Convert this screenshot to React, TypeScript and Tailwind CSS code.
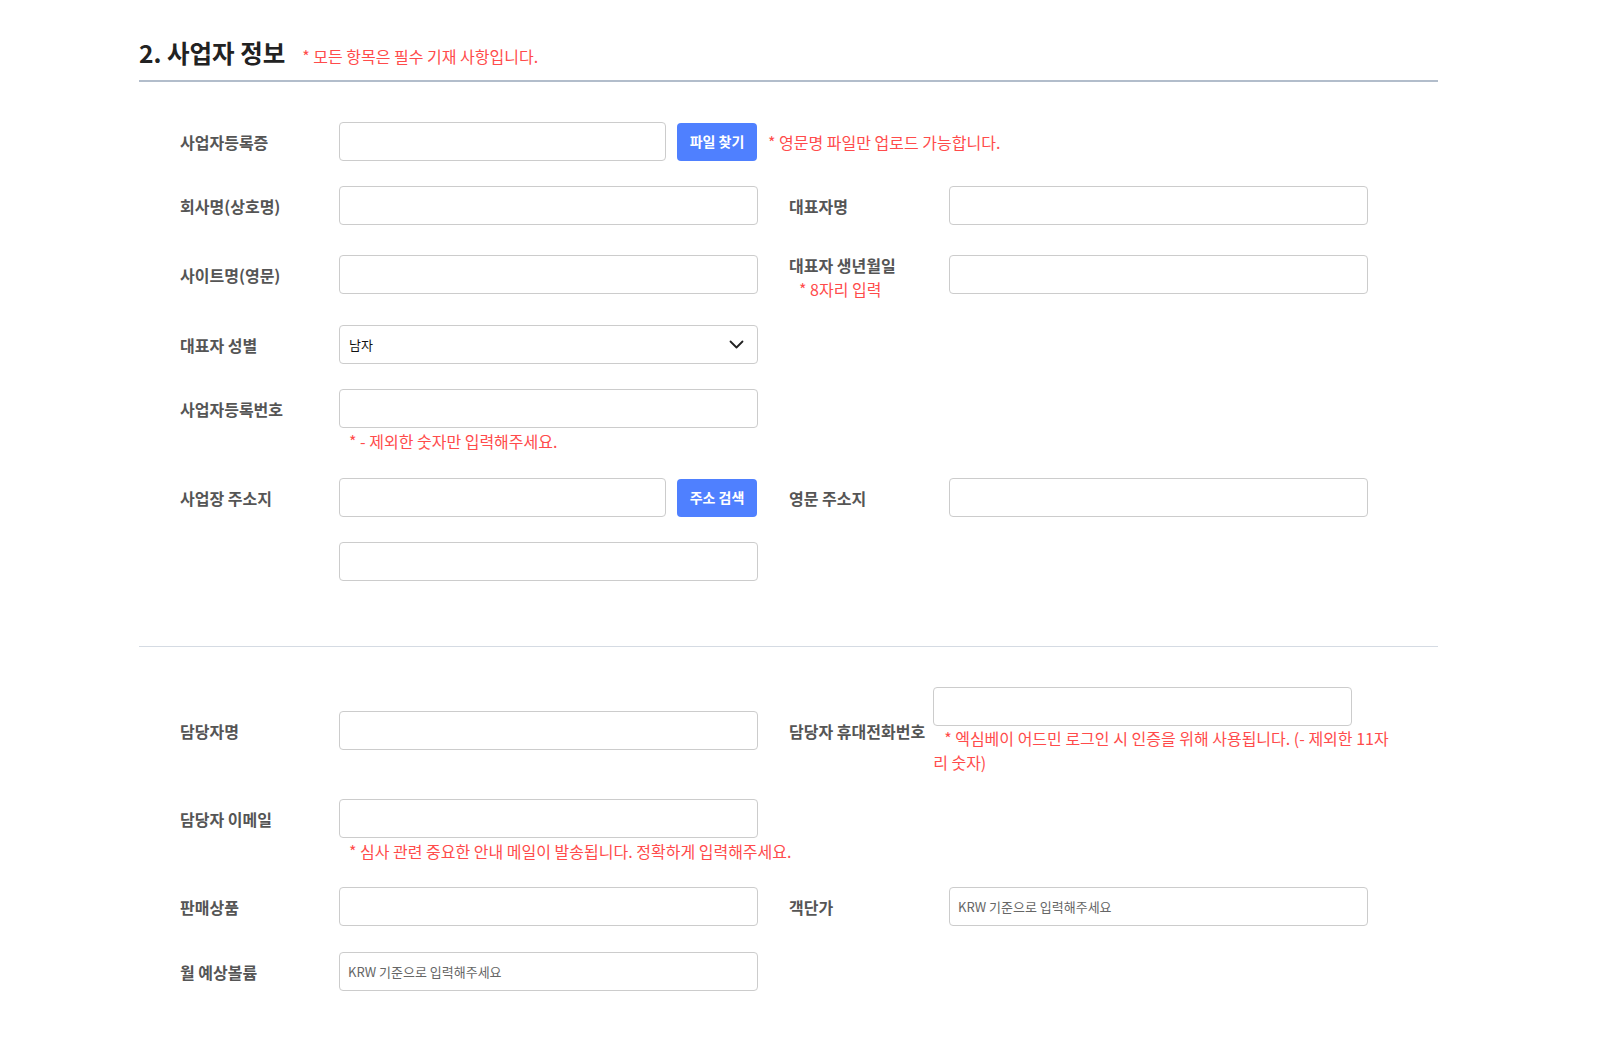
import React from "react";

const labelCls = "shrink-0 text-[16px] font-bold text-[#555]";
const inputCls =
  "h-[39px] rounded-[4px] border border-[#cccccc] bg-white px-2 text-[13px] text-[#222] outline-none placeholder:text-[#666]";
const noteCls = "text-[16px] text-[#ff4b4b]";
const btnCls =
  "h-[38px] w-[80px] shrink-0 rounded-[4px] bg-[#4f80ff] text-[14px] font-bold text-white";

function Label({ children, w = "w-[159px]" }: { children: React.ReactNode; w?: string }) {
  return <div className={`${labelCls} ${w} flex h-[39px] items-center`}>{children}</div>;
}

export default function App() {
  return (
    <div className="min-h-screen bg-white pb-10 font-['Noto_Sans_CJK_KR','Noto_Sans',sans-serif]">
      <div className="ml-[139px] w-[1299px] pt-[37px]">
        {/* 제목 */}
        <div className="flex items-baseline border-b-2 border-[#b2bdcb] pb-[11px]">
          <h2 className="text-[24.5px] font-bold leading-[32px] text-[#222]">2. 사업자 정보</h2>
          <span className={`${noteCls} ml-[17px]`}>* 모든 항목은 필수 기재 사항입니다.</span>
        </div>

        <div className="pl-[41px]">
          {/* 사업자등록증 */}
          <div className="mt-[40px] flex items-center">
            <Label>사업자등록증</Label>
            <input className={`${inputCls} w-[327px]`} />
            <button className={`${btnCls} ml-[11px]`}>파일 찾기</button>
            <span className={`${noteCls} ml-[11px]`}>* 영문명 파일만 업로드 가능합니다.</span>
          </div>

          {/* 회사명 / 대표자명 */}
          <div className="mt-[25px] flex items-center">
            <Label>회사명(상호명)</Label>
            <input className={`${inputCls} w-[419px]`} />
            <div className="ml-[31px] flex">
              <Label w="w-[160px]">대표자명</Label>
              <input className={`${inputCls} w-[419px]`} />
            </div>
          </div>

          {/* 사이트명 / 생년월일 */}
          <div className="mt-[30px] flex items-start">
            <Label>사이트명(영문)</Label>
            <input className={`${inputCls} w-[419px]`} />
            <div className="ml-[31px] flex items-start">
              <div className="-mt-[2px] w-[160px] shrink-0 leading-[24px]">
                <div className="text-[16px] font-bold text-[#555]">대표자 생년월일</div>
                <div className={`${noteCls} pl-[10px]`}>* 8자리 입력</div>
              </div>
              <input className={`${inputCls} w-[419px]`} />
            </div>
          </div>

          {/* 대표자 성별 */}
          <div className="mt-[24px] flex items-center">
            <Label>대표자 성별</Label>
            <div className="flex h-[39px] w-[419px] items-center justify-between rounded-[4px] border border-[#cccccc] bg-white pl-[9px] pr-[13px]">
              <span className="text-[13px] text-[#111]">남자</span>
              <svg width="15" height="9" viewBox="0 0 15 9" fill="none">
                <path d="M1.5 1.5l6 6 6-6" stroke="#222" strokeWidth="1.8" strokeLinecap="round" strokeLinejoin="round" />
              </svg>
            </div>
          </div>

          {/* 사업자등록번호 */}
          <div className="mt-[25px] flex items-start">
            <Label>사업자등록번호</Label>
            <div className="flex flex-col">
              <input className={`${inputCls} w-[419px]`} />
              <div className={`${noteCls} pl-[10px] leading-[26px]`}>* - 제외한 숫자만 입력해주세요.</div>
            </div>
          </div>

          {/* 사업장 주소지 / 영문 주소지 */}
          <div className="mt-[24px] flex items-center">
            <Label>사업장 주소지</Label>
            <div className="flex w-[419px] items-center gap-[11px]">
              <input className={`${inputCls} w-[327px]`} />
              <button className={btnCls}>주소 검색</button>
            </div>
            <div className="ml-[31px] flex">
              <Label w="w-[160px]">영문 주소지</Label>
              <input className={`${inputCls} w-[419px]`} />
            </div>
          </div>

          <div className="mt-[25px] flex">
            <div className="w-[159px] shrink-0" />
            <input className={`${inputCls} w-[419px]`} />
          </div>
        </div>

        <div className="mt-[65px] border-t border-[#d5dbe3]" />

        <div className="pl-[41px]">
          {/* 담당자명 / 휴대전화번호 */}
          <div className="mt-[40px] flex items-center">
            <Label>담당자명</Label>
            <input className={`${inputCls} w-[419px]`} />
            <div className="ml-[31px] flex items-center">
              <div className={`${labelCls} min-w-[144px] pr-[8px]`}>담당자 휴대전화번호</div>
              <div className="w-[456px]">
                <input className={`${inputCls} w-[419px]`} />
                <div className={`${noteCls} indent-[11px] leading-[24px]`}>
                  * 엑심베이 어드민 로그인 시 인증을 위해 사용됩니다. (- 제외한 11자리 숫자)
                </div>
              </div>
            </div>
          </div>

          {/* 담당자 이메일 */}
          <div className="mt-[25px] flex items-start">
            <Label>담당자 이메일</Label>
            <div className="flex flex-col">
              <input className={`${inputCls} w-[419px]`} />
              <div className={`${noteCls} pl-[10px] leading-[26px]`}>
                * 심사 관련 중요한 안내 메일이 발송됩니다. 정확하게 입력해주세요.
              </div>
            </div>
          </div>

          {/* 판매상품 / 객단가 */}
          <div className="mt-[23px] flex items-center">
            <Label>판매상품</Label>
            <input className={`${inputCls} w-[419px]`} />
            <div className="ml-[31px] flex">
              <Label w="w-[160px]">객단가</Label>
              <input className={`${inputCls} w-[419px]`} placeholder="KRW 기준으로 입력해주세요" />
            </div>
          </div>

          {/* 월 예상볼륨 */}
          <div className="mt-[26px] flex items-center">
            <Label>월 예상볼륨</Label>
            <input className={`${inputCls} w-[419px]`} placeholder="KRW 기준으로 입력해주세요" />
          </div>
        </div>
      </div>
    </div>
  );
}
